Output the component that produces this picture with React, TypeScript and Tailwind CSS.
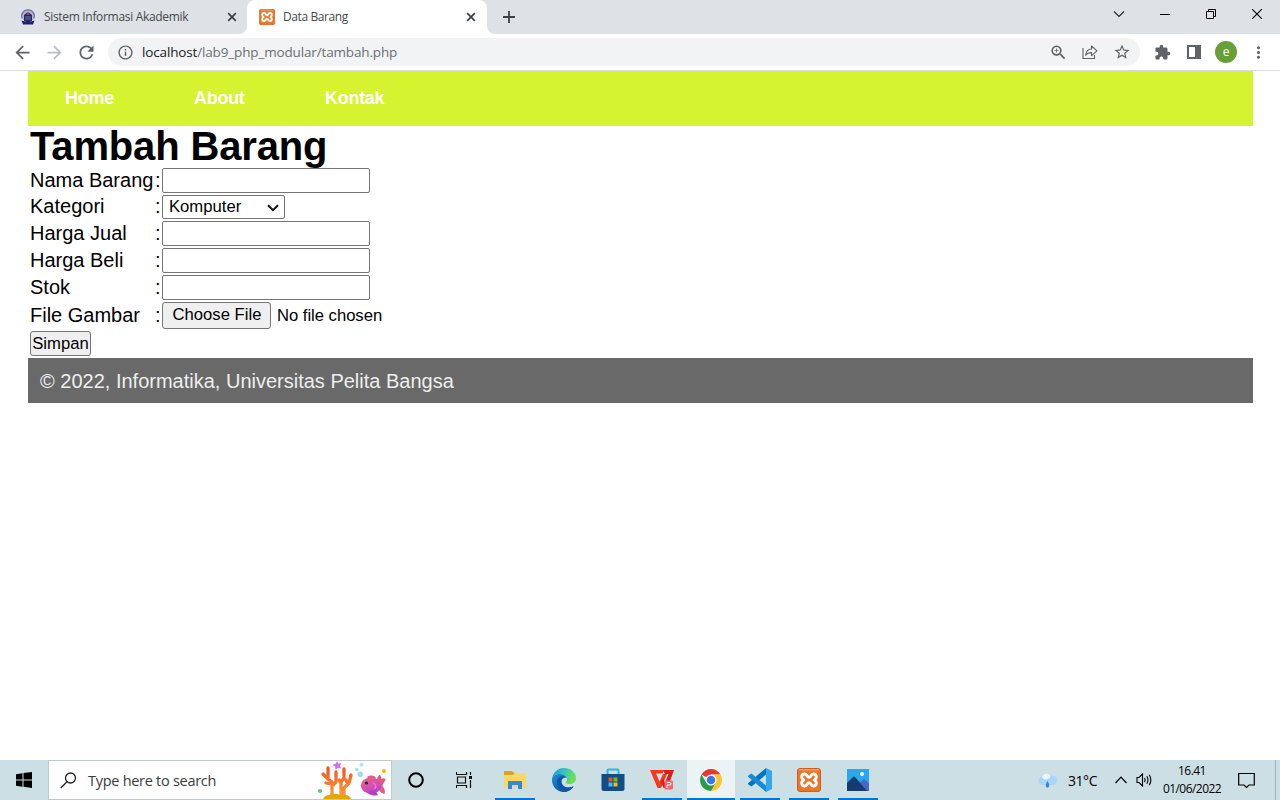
import React from "react";
import {
  MdArrowBack,
  MdArrowForward,
  MdRefresh,
  MdInfoOutline,
  MdZoomIn,
  MdStarBorder,
  MdMoreVert,
} from "react-icons/md";

function XamppIcon({ size }: { size: number }) {
  return (
    <svg width={size} height={size} viewBox="0 0 24 24" className="shrink-0">
      <rect x="0.5" y="0.5" width="23" height="23" rx="2.5" fill="#ee7426" stroke="#c95f22" />
      <path d="M2 1.8h20" stroke="#f8b282" strokeWidth="1" />
      <path
        d="M8 6C4.200 5.600 3.600 10.400 6.800 12 3.600 13.600 4.200 18.400 8 18c2.200-.2 2-3.400 4-3.400s1.800 3.200 4 3.400c3.800.4 4.400-4.400 1.200-6 3.200-1.600 2.600-6.400-1.200-6-2.200.2-2 3.400-4 3.400S10.200 6.200 8 6z"
        stroke="#fff"
        strokeWidth="2.900"
        fill="none"
        strokeLinejoin="round"
      />
    </svg>
  );
}

function CampusIcon() {
  return (
    <svg width="16" height="16" viewBox="0 0 16 16" className="shrink-0">
      <circle cx="8" cy="7" r="6.2" fill="#b4b6d4" />
      <path d="M2.2 9.5A6.2 6.2 0 0 1 8 .8a6.2 6.2 0 0 1 5.8 8.7" fill="none" stroke="#6d72a8" strokeWidth="1.3" />
      <path d="M4 6l4-3 4 3v6H4z" fill="#25285f" />
      <path d="M8 3.300l1.300 2.600H6.700z" fill="#e04a3c" />
      <path d="M5.3 8h5.4M5.3 10h5.4" stroke="#8d91c7" strokeWidth=".8" />
      <path d="M1.500 11.500l3.500 1 3-1 3 1 3.500-1-1.500 4H3z" fill="#1d2178" />
    </svg>
  );
}

function TabClose() {
  return (
    <svg width="10" height="10" viewBox="0 0 10 10" className="shrink-0">
      <path d="M1.2 1.2l7.6 7.6M8.8 1.2L1.2 8.8" stroke="#3c4043" strokeWidth="1.7" />
    </svg>
  );
}

function TabStrip() {
  return (
    <div className="flex h-[34px] bg-[#dee1e6] text-[12px] text-[#45494d]">
      <div className="flex w-[247px] items-center pl-5 pr-[10px]">
        <CampusIcon />
        <span className="ml-2 flex-1 whitespace-nowrap tracking-[-0.32px]">Sistem Informasi Akademik</span>
        <TabClose />
      </div>
      <div className="relative flex w-[240px] items-center rounded-t-lg bg-white pl-3 pr-[11px]">
        <svg className="absolute -left-2 bottom-0" width="8" height="8">
          <path d="M8 0v8H0a8 8 0 0 0 8-8" fill="#fff" />
        </svg>
        <svg className="absolute -right-2 bottom-0" width="8" height="8">
          <path d="M0 0v8h8a8 8 0 0 1-8-8" fill="#fff" />
        </svg>
        <XamppIcon size={16} />
        <span className="ml-2 flex-1 whitespace-nowrap tracking-[-0.4px]">Data Barang</span>
        <TabClose />
      </div>
      <div className="flex flex-1 items-center pl-4">
        <svg width="12" height="12" viewBox="0 0 12 12">
          <path d="M6 0v12M0 6h12" stroke="#3c4043" strokeWidth="1.8" />
        </svg>
      </div>
      <div className="flex h-[28px]">
        <div className="flex w-[46px] items-center justify-center">
          <svg width="12" height="12" viewBox="0 0 12 12">
            <path d="M1 3.5l5 5 5-5" fill="none" stroke="#222" strokeWidth="1.1" />
          </svg>
        </div>
        <div className="flex w-[46px] items-center justify-center">
          <svg width="10" height="10" viewBox="0 0 10 10">
            <path d="M0 5.5h10" stroke="#000" />
          </svg>
        </div>
        <div className="flex w-[46px] items-center justify-center">
          <svg width="10" height="10" viewBox="0 0 10 10">
            <path d="M.5 2.5h7v7h-7zM2.5 2.5v-2h7v7h-2" fill="none" stroke="#000" />
          </svg>
        </div>
        <div className="flex w-[46px] items-center justify-center">
          <svg width="10" height="10" viewBox="0 0 10 10">
            <path d="M0 0l10 10M10 0L0 10" stroke="#000" strokeWidth="1.1" />
          </svg>
        </div>
      </div>
    </div>
  );
}

function Cell({ children }: { children: React.ReactNode }) {
  return <div className="flex w-8 shrink-0 items-center justify-center">{children}</div>;
}

function Toolbar() {
  return (
    <div className="flex h-[37px] items-center border-b border-[#d9dbde] bg-white px-[6px] text-[#5f6368]">
      <Cell><MdArrowBack size={21} /></Cell>
      <Cell><MdArrowForward size={21} color="#bbbdbf" /></Cell>
      <Cell><MdRefresh size={21} /></Cell>
      <div className="ml-[6px] flex h-7 w-[1032px] items-center rounded-full bg-[#f1f3f4] pl-[9px] pr-[2px]">
        <MdInfoOutline size={17} />
        <span className="ml-2 flex-1 whitespace-nowrap text-[13.500px] tracking-[-0.15px] text-[#6b6f73]">
          <span className="text-[#202124]">localhost</span>/lab9_php_modular/tambah.php
        </span>
        <Cell><MdZoomIn size={19} /></Cell>
        <Cell>
          <svg width="16" height="16" viewBox="0 0 16 16" fill="none" stroke="#5f6368" strokeWidth="1.1">
            <path d="M1 4v10.5h11.5V11" />
            <path d="M9.5 2v3C6 5.2 4 7.6 3.6 11.2 5 9.3 7 8.6 9.5 8.6v3L15 6.8z" strokeLinejoin="round" />
          </svg>
        </Cell>
        <Cell><MdStarBorder size={18} /></Cell>
      </div>
      <div className="ml-[6px] flex">
        <Cell>
          <svg width="17" height="17" viewBox="0 0 24 24" fill="#5f6368">
            <path d="M20.500 11H19V7c0-1.100-.9-2-2-2h-4V3.500a2.500 2.500 0 0 0-5 0V5H4c-1.100 0-2 .9-2 2v3.800h1.500a2.700 2.700 0 0 1 0 5.400H2V20c0 1.100.9 2 2 2h3.800v-1.500a2.700 2.700 0 0 1 5.400 0V22H17c1.100 0 2-.9 2-2v-4h1.500a2.500 2.500 0 0 0 0-5z" />
          </svg>
        </Cell>
        <Cell>
          <svg width="14" height="14" viewBox="0 0 14 14">
            <path d="M0 0h14v14H0zM2 2v10h6V2z" fill="#5f6368" fillRule="evenodd" />
          </svg>
        </Cell>
        <Cell>
          <div className="flex h-[22px] w-[22px] shrink-0 items-center justify-center rounded-full bg-[#689f38] pb-px text-[12px] text-white">
            e
          </div>
        </Cell>
        <Cell><MdMoreVert size={19} /></Cell>
      </div>
    </div>
  );
}

function Field({ label, height, children }: { label: string; height: string; children: React.ReactNode }) {
  return (
    <div className={`flex items-center ${height}`}>
      <span className="w-[125px] whitespace-nowrap leading-[23px]">{label}</span>
      <span className="w-[7px] leading-[23px]">:</span>
      {children}
    </div>
  );
}

function TextInput() {
  return <input type="text" className="h-[25px] w-[208px] rounded-[2px] border border-[#767676] bg-white px-1 text-[16.67px] outline-none" />;
}

function Page() {
  return (
    <div className="ml-7 mr-[27px] flex-1 font-['Liberation_Sans',Arial,sans-serif] text-[20px] text-black">
      <nav className="flex h-[55px] items-center bg-[#d5f32f] pl-[37px] text-[18px] font-bold tracking-[-0.28px] text-white">
        <a className="w-[129px]">Home</a>
        <a className="w-[131px]">About</a>
        <a>Kontak</a>
      </nav>
      <h1 className="h-[42px] whitespace-nowrap pl-[2px] text-[40px] font-bold leading-[40px] tracking-[-0.15px]">Tambah Barang</h1>
      <form className="flex flex-col gap-[2px] pl-[2px]">
        <Field label="Nama Barang" height="h-[25px]"><TextInput /></Field>
        <div className="flex h-[24px] items-start">
          <span className="w-[125px] whitespace-nowrap leading-[23px]">Kategori</span>
          <span className="w-[7px] leading-[23px]">:</span>
          <div className="flex h-[24px] w-[123px] items-center justify-between rounded-[2px] border border-[#767676] bg-white pb-px pl-[6px] pr-[5px] text-[16.67px]">
            <span>Komputer</span>
            <svg width="12" height="8" viewBox="0 0 12 8" className="mt-[2px]">
              <path d="M1 1.2l5 5 5-5" fill="none" stroke="#111" strokeWidth="2" />
            </svg>
          </div>
        </div>
        <Field label="Harga Jual" height="h-[25px]"><TextInput /></Field>
        <Field label="Harga Beli" height="h-[25px]"><TextInput /></Field>
        <Field label="Stok" height="h-[25px]"><TextInput /></Field>
        <Field label="File Gambar" height="h-[27px]">
          <button type="button" className="h-[27px] w-[109px] whitespace-nowrap rounded-[3px] border border-[#767676] bg-[#efefef] pl-px text-[16.67px] leading-none">
            Choose File
          </button>
          <span className="ml-[6px] whitespace-nowrap text-[16.67px] tracking-[-0.03px]">No file chosen</span>
        </Field>
        <button type="button" className="h-[25px] w-[61px] rounded-[3px] border border-[#767676] bg-[#efefef] pt-[2px] text-[16.67px] leading-none">
          Simpan
        </button>
      </form>
      <footer className="mt-[2px] flex h-[45px] items-center bg-[#696969] pl-[12px] text-[#eeeeee]">
        © 2022, Informatika, Universitas Pelita Bangsa
      </footer>
    </div>
  );
}

function Reef() {
  return (
    <svg width="72" height="38" viewBox="0 0 72 38">
      <defs>
        <linearGradient id="coral" gradientUnits="userSpaceOnUse" x1="0" y1="5" x2="0" y2="35">
          <stop offset="0" stopColor="#f4511e" />
          <stop offset="1" stopColor="#fb9a3c" />
        </linearGradient>
        <linearGradient id="fish" x1="0" y1="0" x2="0.6" y2="1">
          <stop offset="0" stopColor="#f06a7c" />
          <stop offset="1" stopColor="#c23fd0" />
        </linearGradient>
      </defs>
      <g fill="none" stroke="url(#coral)" strokeWidth="3.300" strokeLinecap="round" strokeLinejoin="round">
        <path d="M15 34V21l-4-3V7M11 18l-5-5M14 23l-5-1M15 25l4-4V11" />
        <path d="M24 34V21l3-4V8M24 22l-2-3M27 34v-7l5-5 2-8M31 23l-2-4" />
      </g>
      <path d="M6 38c1-3 4-4 6-4 4-2 8-1 11 0 5-1 10 0 11 4z" fill="#e2a512" />
      <path d="M20 0l1.300 2.500 3.200-.5-1.700 2.700 1.500 2.800-3.200-.8-2.600 2-.3-3.300-2.700-1.700 3.200-1z" fill="#d76cf0" />
      <circle cx="3" cy="30" r="2" fill="#4fcb74" />
      <circle cx="67" cy="10" r="2" fill="#f7b500" />
      <circle cx="43.300" cy="13.300" r="2.700" fill="#9edcf5" />
      <circle cx="40" cy="8.500" r="1.700" fill="#9edcf5" />
      <circle cx="44.500" cy="3.800" r="2" fill="#b5e4f8" />
      <path d="M50 16c3-2 7-2 9 1l-4 4zM60 21c0-5 1-7 3-7 1 1.500 1.500 2.500 1 4 2-1 3.500-1 4.500 0-1 4-3 5-3 7 2 2 3 5 2 8-4-1-6-4-7-7z" fill="#e25a87" />
      <ellipse cx="54" cy="24.500" rx="10.200" ry="8" fill="url(#fish)" />
      <path d="M50 31c3 4 7 4 11 3l-3-5z" fill="#b53dc8" />
      <path d="M56 22c3 1 4 4 1 6" fill="none" stroke="#e978d2" strokeWidth="1.500" />
      <circle cx="49.500" cy="22" r="1.600" fill="#26203c" />
    </svg>
  );
}

function TaskSlot({ children, open, active, wide }: { children: React.ReactNode; open?: boolean; active?: boolean; wide?: boolean }) {
  return (
    <div className={`flex h-10 w-12 shrink-0 flex-col items-center ${active ? "bg-[#ebf3f4]" : ""}`}>
      <div className="flex h-[38px] items-center justify-center pt-[2px]">{children}</div>
      {open && <div className={`h-[2px] bg-[#0078d7] ${wide ? "w-12" : "w-10"}`} />}
    </div>
  );
}

function Taskbar() {
  return (
    <div className="flex h-10 bg-[#cbdfe4] text-black">
      <div className="flex w-12 items-center justify-center">
        <svg width="16" height="16" viewBox="0 0 16 16">
          <path d="M0 2.200L6.500 1.300V7.500H0zM7.500 1.100L16 0v7.500H7.500zM0 8.500h6.500v6.200L0 13.800zM7.500 8.500H16V16l-8.500-1.200z" fill="#000" />
        </svg>
      </div>
      <div className="flex w-[344px] items-center border border-[#c4c9cc] bg-white pl-[11px] pr-[2px]">
        <svg width="17" height="17" viewBox="0 0 17 17" fill="none" stroke="#222" strokeWidth="1.300">
          <circle cx="10.500" cy="6" r="5" />
          <path d="M7 9.800L.8 16" />
        </svg>
        <span className="ml-[11px] flex-1 whitespace-nowrap pt-[2px] text-[14.500px] tracking-[-0.28px] text-[#3b3b3b]">Type here to search</span>
        <Reef />
      </div>
      <div className="flex w-12 items-center justify-center">
        <svg width="16" height="16" viewBox="0 0 16 16">
          <circle cx="8" cy="8" r="6.800" fill="none" stroke="#000" strokeWidth="2" />
        </svg>
      </div>
      <div className="mr-[3px] flex w-12 items-center justify-center">
        <svg width="17" height="16" viewBox="0 0 17 16" fill="none" stroke="#111" strokeWidth="1.200">
          <path d="M.5 0v2.500h10V0M1.500 5h8v6h-8zM.5 16v-2.500h10V16M14.500 0v3M14.500 8v8" />
          <path d="M13 4h3v3h-3z" fill="#111" stroke="none" />
        </svg>
      </div>
      <div className="flex gap-px">
        <TaskSlot open>
          <svg width="22" height="20" viewBox="0 0 22 20">
            <path d="M0 1h8l2 2h12v14H0z" fill="#dba31b" />
            <path d="M0 5h9l2-2h11v15H0z" fill="#fed567" />
            <path d="M4 19v-8h14v8h-4v-4H8v4z" fill="#2f8ad8" />
          </svg>
        </TaskSlot>
        <TaskSlot>
          <svg width="24" height="24" viewBox="0 0 24 24">
            <defs>
              <linearGradient id="edgeA" x1="0" y1="0" x2="1" y2="0.300">
                <stop offset="0" stopColor="#168bd6" />
                <stop offset="0.500" stopColor="#35c1c8" />
                <stop offset="1" stopColor="#6be152" />
              </linearGradient>
              <linearGradient id="edgeB" x1="0" y1="0" x2="1" y2="1">
                <stop offset="0" stopColor="#1b91d5" />
                <stop offset="1" stopColor="#0a4594" />
              </linearGradient>
            </defs>
            <path d="M0 11C1 4 6 0 12 0c7 0 12 4.500 12 10 0 4-3 6-6.500 6-2.500 0-4-1-3.500-2 .8-1 1-1.800 1-2.700C15 8 11.500 6 8 6 4 6 1 8 0 11z" fill="url(#edgeA)" />
            <path d="M0 11C1 7.500 4 6 8 6c3.500 0 6 2 6.800 4C11 9 9 12 9.500 14.500c.7 4 5.500 6.500 12 4C19 22.500 15 24 12 24 5 24 0 18.500 0 12z" fill="url(#edgeB)" />
            <path d="M5 14c0-4.500 4-6.500 9-5.500-3.500.5-5 3.500-4.500 6 .7 4 5.500 6.500 12 4-3 4-7 5.500-9.500 5.500-4-1-7-5-7-10z" fill="#0d58a7" />
          </svg>
        </TaskSlot>
        <TaskSlot>
          <svg width="24" height="24" viewBox="0 0 24 24">
            <path d="M6.500 7V2.500Q6.500 1.500 7.500 1.500h9q1 0 1 1V7" fill="none" stroke="#29b6e8" strokeWidth="2" />
            <path d="M.5 6h23v14.500Q23.500 23 21 23H3Q.5 23 .5 20.500z" fill="#124d87" />
            <path d="M7.500 9.500h4v4h-4z" fill="#f25022" />
            <path d="M12.500 9.500h4v4h-4z" fill="#7fba00" />
            <path d="M7.500 14.500h4v4h-4z" fill="#38bdf8" />
            <path d="M12.500 14.500h4v4h-4z" fill="#ffb900" />
          </svg>
        </TaskSlot>
        <TaskSlot open>
          <svg width="24" height="22" viewBox="0 0 24 22">
            <path d="M0 1h14l-1.500 3.500H6l3.500 8L13 5h4l-6 14H7.500z" fill="#f23a20" />
            <path d="M13 1h11l-6.500 18h-4L11 13l2-4 2 5 3.500-9H15z" fill="#dc1e18" />
            <rect x="14.500" y="11.500" width="8.500" height="9" rx="1.500" fill="#ef6670" />
            <path d="M17 19v-3h3q1 0 1-1.200T20 13.500h-3" fill="none" stroke="#fff" strokeWidth="1" />
          </svg>
        </TaskSlot>
        <TaskSlot open active wide>
          <svg width="22" height="22" viewBox="0 0 22 22">
            <path d="M11 11L1.500 5.500A11 11 0 0 1 20.500 5.500H11z" fill="#e33b2e" />
            <path d="M20.500 5.500A11 11 0 0 1 11 22l4.800-8.200L11 5.500z" fill="#fcc62a" />
            <path d="M1.500 5.500A11 11 0 0 0 11 22l4.800-8.200H6.200z" fill="#2b9a4b" />
            <circle cx="11" cy="11" r="5.500" fill="#fff" />
            <circle cx="11" cy="11" r="4.300" fill="#3b78e7" />
          </svg>
        </TaskSlot>
        <TaskSlot open>
          <svg width="24" height="24" viewBox="0 0 24 24">
            <path d="M18 0l6 3v18l-6 3z" fill="#32a8ee" />
            <path d="M18 0v6.500L3.500 18.500 0 16.200 0 15.200z" fill="#0073bd" />
            <path d="M18 24v-6.500L3.500 5.500 0 7.800v1z" fill="#168bd3" />
          </svg>
        </TaskSlot>
        <TaskSlot open><XamppIcon size={24} /></TaskSlot>
        <TaskSlot open>
          <svg width="22" height="22" viewBox="0 0 22 22">
            <path d="M0 0h22v22H0z" fill="#26a9ed" />
            <path d="M12 14l5-4 5 4.500V22H10z" fill="#4e65c5" />
            <path d="M0 14l6-6q1-.8 2 0l12 14H0z" fill="#153b70" />
            <circle cx="15" cy="5" r="2" fill="#fff" />
          </svg>
        </TaskSlot>
      </div>
      <div className="ml-auto flex items-center">
        <svg width="21" height="17" viewBox="0 0 21 17">
          <path d="M5 13a4.500 4.500 0 0 1-.5-8.500C6 1 11 0 13.500 3.500c5-.5 7.500 2.500 6.500 6-.6 2-2 3-4 3.500z" fill="#a9d5f8" />
          <path d="M5 5C6 1 11 0 13.500 4c-1.500 4-6 5-8.500 1z" fill="#e8f6ff" />
          <path d="M10.500 9c-2.500 4-2 6.500 0 6.500s2.500-2.500 0-6.500z" fill="#3185d6" />
        </svg>
        <span className="ml-[10px] w-[47px] whitespace-nowrap text-[14px] tracking-[-0.45px]">31°C</span>
        <svg width="12" height="8" viewBox="0 0 12 8">
          <path d="M.5 7L6 1.200 11.500 7" fill="none" stroke="#000" strokeWidth="1.200" />
        </svg>
        <svg width="17" height="14" viewBox="0 0 17 14" className="ml-[9px]" fill="none" stroke="#000" strokeWidth="1.100">
          <path d="M1 4.500h2L6.500 1v12L3 9.500H1z" />
          <path d="M8.500 5q1.200 2 0 4M10.800 3.200q2.400 3.800 0 7.600M13.200 1.800q3.400 5.200 0 10.400" />
        </svg>
        <div className="ml-[5px] flex w-[68px] flex-col items-center whitespace-nowrap text-[12px] leading-[18px] tracking-[-0.55px]">
          <span>16.41</span>
          <span>01/06/2022</span>
        </div>
        <svg width="17" height="17" viewBox="0 0 17 17" className="ml-[12px]">
          <path d="M.7 1.500h15.600v11.500h-5.300L8.500 15.500 6 13H.7z" fill="none" stroke="#000" strokeWidth="1.200" />
        </svg>
        <div className="ml-[20px] h-10 w-[5px] border-l border-[#9eb3b9]" />
      </div>
    </div>
  );
}

export default function App() {
  return (
    <div className="flex h-[800px] w-[1280px] flex-col overflow-hidden bg-white font-['Open_Sans','Noto_Sans',sans-serif]">
      <TabStrip />
      <Toolbar />
      <Page />
      <Taskbar />
    </div>
  );
}
